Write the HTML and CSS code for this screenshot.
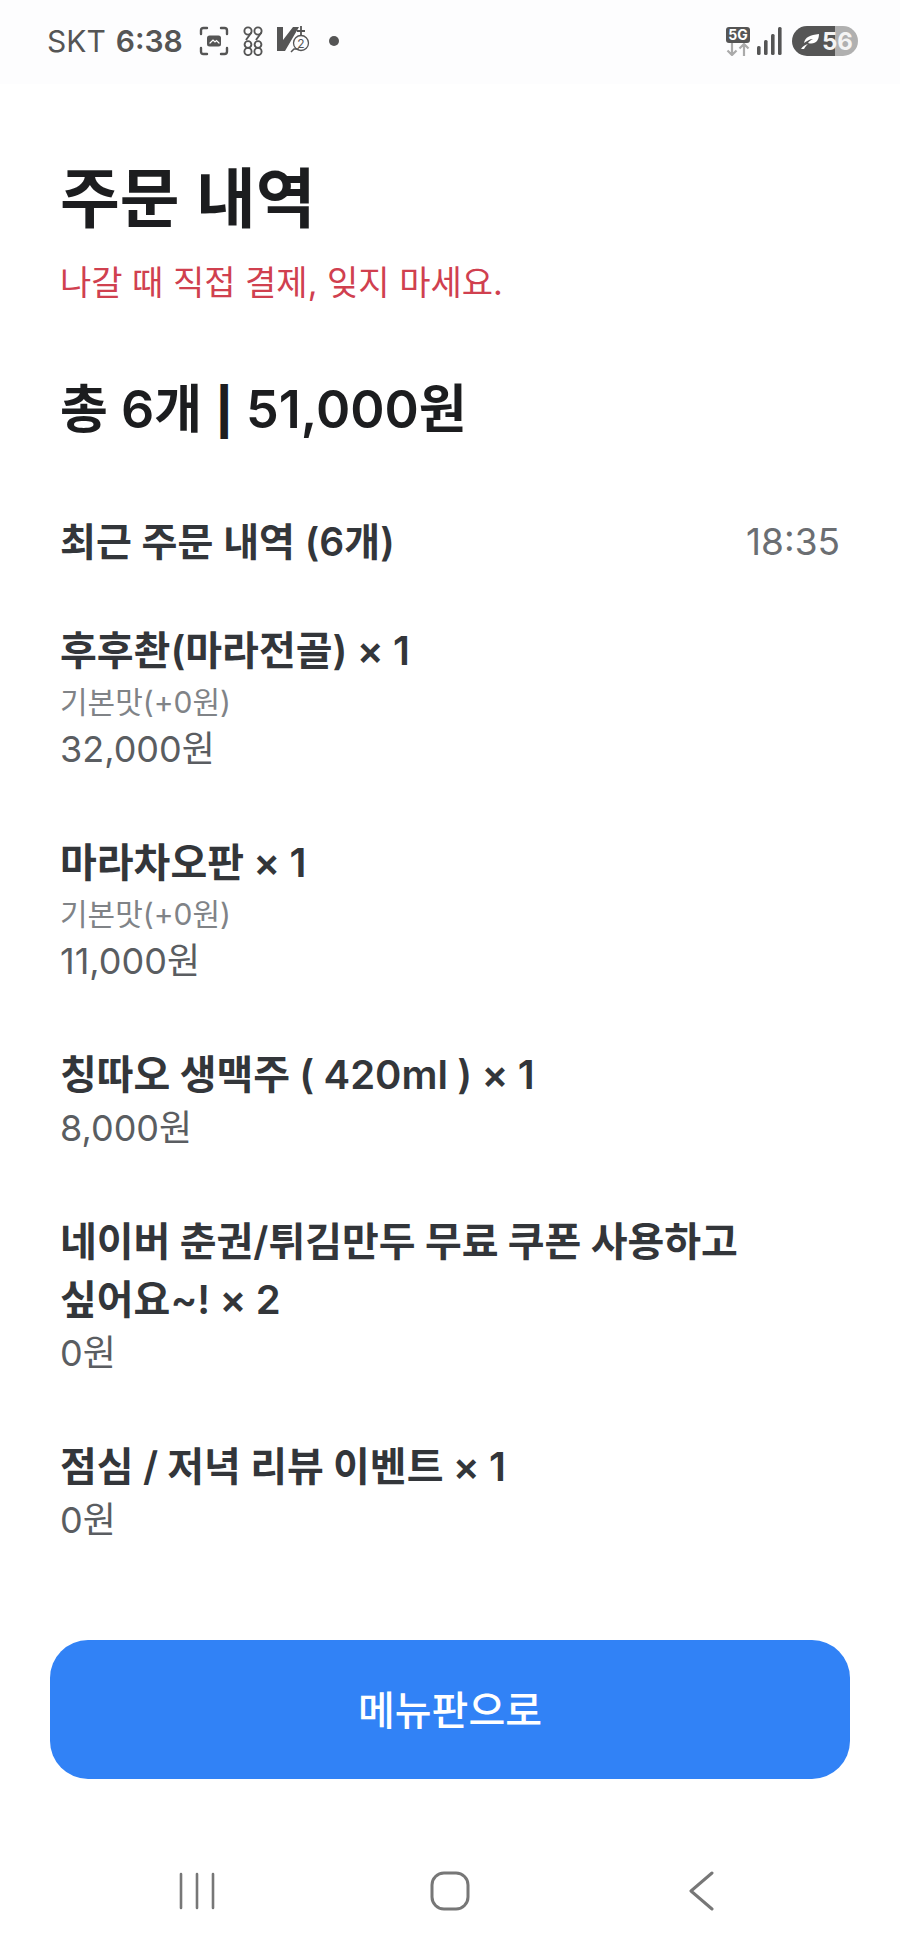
FILE: index.html
```html
<!DOCTYPE html>
<html lang="ko">
<head>
  <meta charset="UTF-8">
  <meta name="viewport" content="width=device-width, initial-scale=1.0">
  <title>주문 내역</title>
  <link rel="stylesheet" href="styles.css">
</head>
<body>
  <div class="status-bar">
    <div class="status-left">
      <span class="carrier">SKT</span>
      <span class="clock">6:38</span>
      <svg class="ico-shot" width="30" height="30" viewBox="0 0 30 30" fill="none" stroke="#555" stroke-width="2.4" stroke-linecap="round">
        <path d="M2 8V4.500Q2 2 4.500 2H8M22 2h3.500Q28 2 28 4.500V8M28 22v3.500Q28 28 25.500 28H22M8 28H4.500Q2 28 2 25.500V22"/>
        <rect x="8" y="9.500" width="14" height="11" rx="2.500" fill="#555" stroke="none"/>
        <path d="M11 17l3-3 2 2 1.500-1.500L20 17" stroke="#fff" stroke-width="1.200"/>
      </svg>
      <svg class="ico-knots" width="20" height="30" viewBox="0 0 20 30" fill="none" stroke="#555" stroke-width="1.900">
        <circle cx="5" cy="5" r="3.600"/><circle cx="15" cy="5" r="3.600"/>
        <path d="M8.400 6.500L3 14M18.400 6.500L13 14"/>
        <circle cx="5" cy="18.500" r="3.400"/><circle cx="15" cy="18.500" r="3.400"/>
        <circle cx="5" cy="25.500" r="3.600"/><circle cx="15" cy="25.500" r="3.600"/>
      </svg>
      <svg class="ico-v" width="34" height="32" viewBox="0 0 34 32" fill="none">
        <path d="M1 2h6v13L17 2h6L9 26H1z" fill="#555"/>
        <path d="M25 1v9M21 6h8" stroke="#555" stroke-width="1.800"/>
        <circle cx="25" cy="18" r="7.500" fill="#fdfdfe" stroke="#555" stroke-width="1.300"/>
        <text class="ico-num" x="25" y="22.500" text-anchor="middle">2</text>
        <path d="M15 27l3-3h5" stroke="#555" stroke-width="1.500"/>
      </svg>
      <span class="dot"></span>
    </div>
    <div class="status-right">
      <div class="net">
        <span class="net-5g">5G</span>
        <svg width="26" height="13" viewBox="0 0 26 13" fill="none" stroke="#aaa" stroke-width="2.200">
          <path d="M7 0v12M2.500 7.500L7 12l4.500-4.500M19 13V1M14.500 5.500L19 1l4.500 4.500"/>
        </svg>
      </div>
      <svg class="signal" width="26" height="28" viewBox="0 0 26 28" fill="#555">
        <rect x="0" y="19" width="3.600" height="9" rx="1.500"/>
        <rect x="7" y="13" width="3.600" height="15" rx="1.500"/>
        <rect x="14" y="7" width="3.600" height="21" rx="1.500"/>
        <rect x="21" y="0" width="3.600" height="28" rx="1.500"/>
      </svg>
      <div class="battery">
        <svg width="20" height="17" viewBox="0 0 20 17" fill="#fff">
          <path d="M1 16C3 13 5 12 8 11 6 13 5 14 4 16zM4 10C5 4 10 2 19 1 19 8 15 12 8 10 9 8 11 7 13 6 10 6 7 8 4 10z"/>
        </svg>
        <span class="battery-num">56</span>
      </div>
    </div>
  </div>

  <div class="page">
    <h1 class="title">주문 내역</h1>
    <p class="notice">나갈 때 직접 결제, 잊지 마세요.</p>
    <h2 class="total">총 6개 <span class="total-sep">|</span> 51,000원</h2>

    <div class="order-head">
      <span class="order-title">최근 주문 내역 (6개)</span>
      <span class="order-time">18:35</span>
    </div>

    <div class="item">
      <div class="item-name">후후촨(마라전골) × 1</div>
      <div class="item-opt">기본맛(+0원)</div>
      <div class="item-price">32,000원</div>
    </div>
    <div class="item">
      <div class="item-name">마라차오판 × 1</div>
      <div class="item-opt">기본맛(+0원)</div>
      <div class="item-price">11,000원</div>
    </div>
    <div class="item">
      <div class="item-name">칭따오 생맥주 ( 420ml ) × 1</div>
      <div class="item-price">8,000원</div>
    </div>
    <div class="item">
      <div class="item-name">네이버 춘권/튀김만두 무료 쿠폰 사용하고 싶어요~! × 2</div>
      <div class="item-price">0원</div>
    </div>
    <div class="item">
      <div class="item-name">점심 / 저녁 리뷰 이벤트 × 1</div>
      <div class="item-price">0원</div>
    </div>
  </div>

  <div class="bottom">
    <button class="menu-btn" type="button">메뉴판으로</button>
  </div>

  <div class="nav-bar">
    <svg width="38" height="38" viewBox="0 0 38 38" stroke="#777" stroke-width="2.600" stroke-linecap="round">
      <path d="M3 2v34M19 2v34M35 2v34"/>
    </svg>
    <svg class="nav-home" width="40" height="40" viewBox="0 0 40 40" fill="none" stroke="#777" stroke-width="3">
      <rect x="2" y="2" width="36" height="36" rx="12"/>
    </svg>
    <svg width="26" height="40" viewBox="0 0 26 40" fill="none" stroke="#777" stroke-width="3" stroke-linecap="round" stroke-linejoin="round">
      <path d="M24 2L3 20l21 18"/>
    </svg>
  </div>
</body>
</html>
```

FILE: styles.css
```css
* {
  box-sizing: border-box;
}

body {
  margin: 0;
  width: 900px;
  height: 1950px;
  display: flex;
  flex-direction: column;
  font-family: Inter, "Noto Sans CJK KR", sans-serif;
  background-color: #ffffff;
  color: #1c1d1f;
}

/* Status bar */
.status-bar {
  height: 84px;
  padding: 0 42px 2px 47px;
  display: flex;
  justify-content: space-between;
  align-items: center;
  background-color: #fdfdfe;
  color: #555555;
}

.status-left,
.status-right {
  display: flex;
  align-items: center;
}

.carrier {
  font-size: 30px;
}

.clock {
  margin-left: 10px;
  font-size: 30px;
  font-weight: 600;
}

.ico-shot {
  margin-left: 16px;
}

.ico-knots {
  margin-left: 14px;
}

.ico-v {
  margin-left: 13px;
}

.ico-num {
  font-size: 12px;
  fill: #555555;
}

.dot {
  width: 10px;
  height: 10px;
  margin-left: 19px;
  border-radius: 50%;
  background-color: #555555;
}

.net {
  display: flex;
  flex-direction: column;
  align-items: center;
  gap: 0;
}

.net-5g {
  padding: 0 2px;
  border-radius: 3px;
  background-color: #555555;
  color: #ffffff;
  font-size: 14px;
  font-weight: 700;
  line-height: 16px;
}

.signal {
  margin-left: 6px;
}

.battery {
  width: 66px;
  height: 30px;
  margin-left: 9px;
  padding-left: 8px;
  display: flex;
  align-items: center;
  gap: 2px;
  border-radius: 15px;
  background: linear-gradient(to right, #555555 65%, #b0b0b0 65%);
}

.battery-num {
  color: #f4f4f4;
  font-size: 24px;
  font-weight: 700;
}

/* Content */
.page {
  flex: 1;
  padding: 70px 60px 0;
}

.title {
  margin: 0;
  font-size: 65px;
  font-weight: 600;
  line-height: 90px;
}

.notice {
  margin: 15px 0 0;
  color: #d0404f;
  font-size: 34px;
  line-height: 48px;
}

.total {
  margin: 71px 0 0;
  font-size: 52px;
  font-weight: 600;
  line-height: 64px;
}

.total-sep {
  font-size: 46px;
  font-weight: 800;
}

.order-head {
  margin-top: 71px;
  display: flex;
  justify-content: space-between;
  align-items: center;
  line-height: 56px;
}

.order-title {
  color: #33363a;
  font-size: 39px;
  font-weight: 600;
}

.order-time {
  color: #6b6e72;
  font-size: 37px;
}

.item {
  margin-top: 61px;
}

.order-head + .item {
  margin-top: 52px;
}

.item-name {
  color: #33363a;
  font-size: 40px;
  font-weight: 600;
  line-height: 58px;
  word-spacing: -0.8px;
  word-break: keep-all;
}

.item-opt {
  color: #808387;
  font-size: 30px;
  line-height: 44px;
}

.item-price {
  color: #5a5d61;
  font-size: 36px;
  line-height: 48px;
}

.item-opt + .item-price {
  margin-top: 1px;
}

.item-name + .item-price {
  margin-bottom: 3px;
}

/* Button */
.bottom {
  padding: 0 50px;
}

.menu-btn {
  width: 100%;
  height: 139px;
  padding-bottom: 5px;
  border: none;
  border-radius: 38px;
  background-color: #3182f6;
  color: #ffffff;
  font-family: inherit;
  font-size: 40px;
  font-weight: 500;
}

/* Navigation bar */
.nav-bar {
  height: 171px;
  padding: 52px 186px 0 178px;
  display: flex;
  justify-content: space-between;
  align-items: center;
}

.nav-home {
  margin-right: 4px;
}
```
